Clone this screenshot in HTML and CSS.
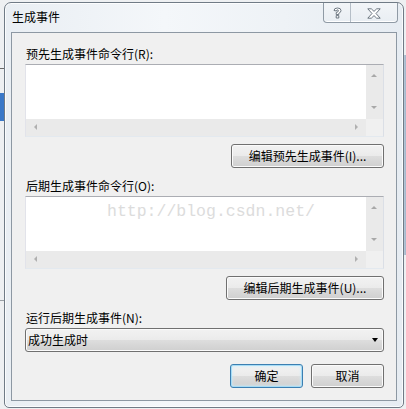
FILE: index.html
```html
<!DOCTYPE html>
<html lang="zh-CN">
<head>
<meta charset="utf-8">
<title>生成事件</title>
<link rel="stylesheet" href="styles.css">
</head>
<body>
<div class="desk">
  <div class="window">
    <div class="titlebar">
      <div class="title">生成事件</div>
      <div class="caption-btns">
        <div class="cbtn help">
          <svg width="9" height="12" viewBox="0 0 9 12"><path d="M1 3.5 Q1 1 4.5 1 Q8 1 8 3.5 Q8 5.5 5.8 6.3 L5.8 7.5 L3.2 7.5 L3.2 5.6 Q5.4 5 5.4 3.8 Q5.4 2.8 4.5 2.8 Q3.6 2.8 3.6 4 Z M3.2 8.6 L5.8 8.6 L5.8 11 L3.2 11 Z" fill="#ffffff" stroke="#5f6a75" stroke-width="0.9" stroke-linejoin="round"/></svg>
        </div>
        <div class="cbtn close">
          <svg width="14" height="11" viewBox="0 0 14 11"><path d="M0.8 0.8 L4.3 0.8 L7 3.4 L9.7 0.8 L13.2 0.8 L9 5.5 L13.2 10.2 L9.7 10.2 L7 7.6 L4.3 10.2 L0.8 10.2 L5 5.5 Z" fill="#ffffff" stroke="#5f6a75" stroke-width="0.9" stroke-linejoin="round"/></svg>
        </div>
      </div>
    </div>
    <div class="client">
      <div class="label">预先生成事件命令行(R):</div>
      <div class="textbox">
        <div class="tb-main">
          <div class="tb-area"></div>
          <div class="vscroll"><span class="arr up"></span><span class="arr down"></span></div>
        </div>
        <div class="hrow">
          <div class="hscroll"><span class="arr left"></span><span class="arr right"></span></div>
          <div class="corner"></div>
        </div>
      </div>
      <div class="btnrow first"><button class="btn wide1">编辑预先生成事件(I)...</button></div>

      <div class="label second">后期生成事件命令行(O):</div>
      <div class="textbox">
        <div class="tb-main">
          <div class="tb-area"><span class="watermark">http://blog.csdn.net/</span></div>
          <div class="vscroll"><span class="arr up"></span><span class="arr down"></span></div>
        </div>
        <div class="hrow">
          <div class="hscroll"><span class="arr left"></span><span class="arr right"></span></div>
          <div class="corner"></div>
        </div>
      </div>
      <div class="btnrow first"><button class="btn wide2">编辑后期生成事件(U)...</button></div>

      <div class="label second">运行后期生成事件(N):</div>
      <div class="combo"><span class="combo-text">成功生成时</span><span class="combo-arrow"></span></div>

      <div class="btnrow footer">
        <button class="btn small default">确定</button>
        <button class="btn small">取消</button>
      </div>
    </div>
  </div>
</div>
</body>
</html>
```

FILE: styles.css
```css
* { box-sizing: border-box; }
html, body { margin: 0; padding: 0; }
body {
  width: 406px;
  height: 409px;
  overflow: hidden;
  background:
    linear-gradient(#3a78c8, #3a78c8) 0 93px / 4px 28px no-repeat,
    linear-gradient(#6a6a6a, #6a6a6a) 0 68px / 4px 1px no-repeat,
    linear-gradient(#9aa0a6, #9aa0a6) 0 300px / 4px 1px no-repeat,
    linear-gradient(90deg, #c9d6e3, #9fb4c9) 403px 55px / 3px 200px no-repeat,
    #eef0f2;
  font-family: "Noto Sans CJK SC", "Noto Sans", sans-serif;
  font-size: 12px;
  color: #000;
}
.desk {
  padding: 2px 0 0 4px;
}
.window {
  width: 400px;
  height: 406px;
  border: 1px solid #707b86;
  border-radius: 7px 7px 5px 5px;
  background: linear-gradient(90deg, #e9eef3 0%, #f4f7fa 40%, #eef2f6 70%, #e6ecf2 100%);
  padding: 0 6px 6px 6px;
  display: flex;
  flex-direction: column;
  box-shadow: inset 0 0 0 1px rgba(255,255,255,0.8);
}
.titlebar {
  height: 29px;
  display: flex;
  align-items: flex-start;
  justify-content: space-between;
}
.title {
  padding: 6px 0 0 1px;
  line-height: 16px;
  font-size: 12px;
}
.caption-btns {
  display: flex;
  height: 20px;
  margin-right: -1px;
  border: 1px solid #8f9aa5;
  border-top: none;
  border-radius: 0 0 4px 4px;
  background: linear-gradient(#f2f5f8, #e9eef3);
  box-shadow: inset 0 -1px 0 #ffffff;
}
.cbtn {
  display: flex;
  align-items: center;
  justify-content: center;
}
.cbtn.help {
  width: 27px;
  border-right: 1px solid #b5bec7;
  padding-top: 1px;
}
.cbtn.close {
  width: 46px;
  padding-top: 1px;
}
.client {
  flex: 1;
  border: 1px solid #8d98a3;
  background: #f0f0f0;
  padding: 13px 12px 0 13px;
  display: flex;
  flex-direction: column;
}
.label {
  height: 16px;
  line-height: 16px;
  margin-bottom: 2px;
  padding-left: 1px;
}
.label.second { margin-top: 10px; }
.textbox {
  height: 73px;
  border: 1px solid;
  border-color: #abadb3 #dbdfe6 #e3e9ef #e2e3ea;
  background: #fff;
  display: flex;
  flex-direction: column;
}
.tb-main {
  flex: 1;
  display: flex;
}
.tb-area {
  flex: 1;
  position: relative;
  background: #fff;
}
.vscroll {
  width: 17px;
  background: #eaeaea;
  position: relative;
}
.hrow {
  height: 17px;
  display: flex;
}
.hscroll {
  flex: 1;
  background: #eaeaea;
  position: relative;
}
.corner {
  width: 17px;
  background: #f0f0f0;
}
.arr {
  position: absolute;
  width: 0;
  height: 0;
  border-style: solid;
}
.arr.up {
  left: 5px; top: 9px;
  border-width: 0 3px 3px 3px;
  border-color: transparent transparent #a8a8a8 transparent;
}
.arr.down {
  left: 5px; bottom: 10px;
  border-width: 3px 3px 0 3px;
  border-color: #a8a8a8 transparent transparent transparent;
}
.arr.left {
  left: 8px; top: 5px;
  border-width: 3px 3px 3px 0;
  border-color: transparent #b0b0b0 transparent transparent;
}
.arr.right {
  right: 8px; top: 5px;
  border-width: 3px 0 3px 3px;
  border-color: transparent transparent transparent #b0b0b0;
}
.btnrow {
  display: flex;
  justify-content: flex-end;
  gap: 8px;
}
.btnrow.first { margin-top: 7px; }
.btnrow.footer { margin-top: 12px; }
.btn {
  height: 24px;
  border: 1px solid #707070;
  border-radius: 3px;
  background: linear-gradient(#f2f2f2 0%, #ebebeb 48%, #dddddd 52%, #cfcfcf 100%);
  box-shadow: inset 0 0 0 1px #fbfbfb;
  font-family: "Noto Sans CJK SC", "Noto Sans", sans-serif;
  font-size: 12px;
  color: #000;
  padding: 0;
  line-height: 20px;
}
.btn.wide1 { width: 153px; }
.btn.wide2 { width: 158px; }
.btn.small { width: 73px; }
.btn.default {
  border-color: #3c7fb1;
  box-shadow: inset 0 0 0 1px #a6dcf6, inset 0 0 3px 1px #cdeefc;
}
.combo {
  height: 24px;
  border: 1px solid #707070;
  border-radius: 3px;
  background: linear-gradient(#f2f2f2 0%, #ebebeb 48%, #dddddd 52%, #cfcfcf 100%);
  box-shadow: inset 0 0 0 1px #fbfbfb;
  display: flex;
  align-items: center;
  justify-content: space-between;
  padding: 0 5px 0 2px;
}
.combo-text { line-height: 16px; }
.combo-arrow {
  width: 0; height: 0;
  border-style: solid;
  border-width: 4px 3.5px 0 3.5px;
  border-color: #000 transparent transparent transparent;
}
.watermark {
  position: absolute;
  left: 81px;
  top: 5px;
  font-family: "Liberation Mono", monospace;
  font-size: 16.5px;
  color: #dcdcdc;
  white-space: nowrap;
}
```
